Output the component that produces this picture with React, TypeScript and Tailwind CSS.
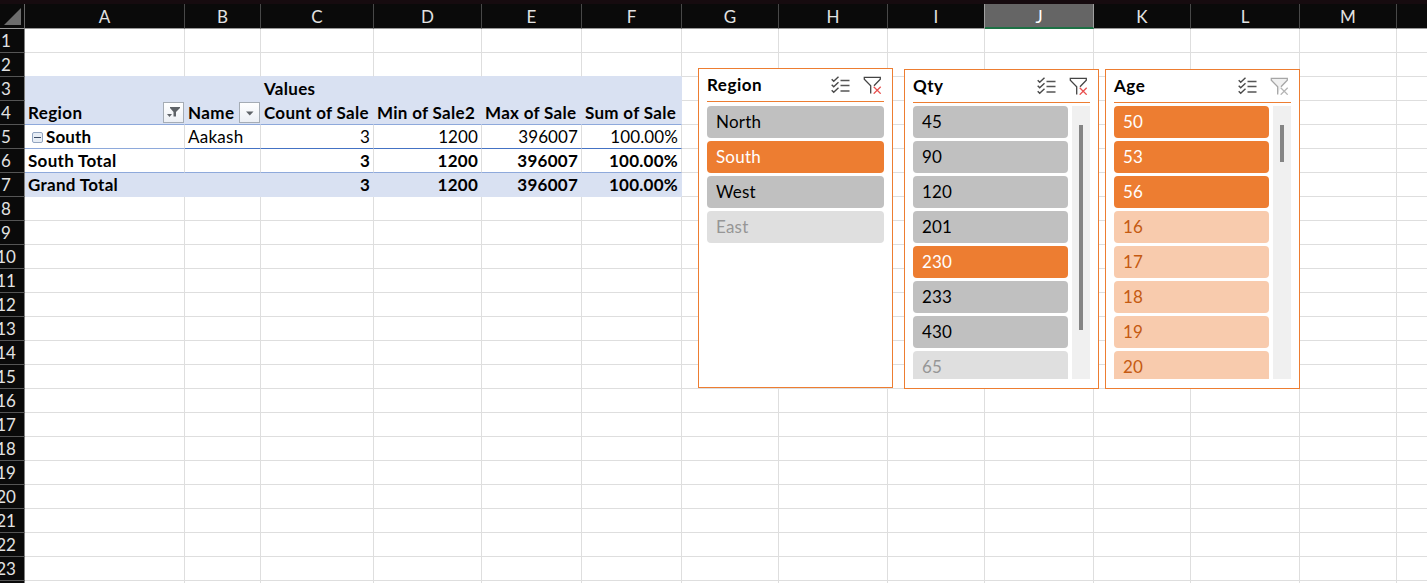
import React from "react";

const columns = [
  { name: "A", w: "w-[160px]" },
  { name: "B", w: "w-[76px]" },
  { name: "C", w: "w-[113px]" },
  { name: "D", w: "w-[108px]" },
  { name: "E", w: "w-[100px]" },
  { name: "F", w: "w-[100px]" },
  { name: "G", w: "w-[97px]" },
  { name: "H", w: "w-[109px]" },
  { name: "I", w: "w-[97px]" },
  { name: "J", w: "w-[109px]" },
  { name: "K", w: "w-[97px]" },
  { name: "L", w: "w-[109px]" },
  { name: "M", w: "w-[97px]" },
  { name: "", w: "w-[97px]" },
];

const data: Record<number, string[]> = {
  3: ["", "", "Values", "", "", ""],
  4: ["Region", "Name", "Count of Sale", "Min of Sale2", "Max of Sale", "Sum of Sale"],
  5: ["South", "Aakash", "3", "1200", "396007", "100.00%"],
  6: ["South Total", "", "3", "1200", "396007", "100.00%"],
  7: ["Grand Total", "", "3", "1200", "396007", "100.00%"],
};

function borderFor(row: number, col: number) {
  if (col > 5) return "border-r-[#dedede] border-b-[#dedede]";
  if (row === 2) return "border-r-[#dedede] border-b-[#d9e1f2]";
  if (row === 3) return "bg-[#d9e1f2] border-r-[#d9e1f2] border-b-[#d9e1f2]";
  if (row === 4) return "bg-[#d9e1f2] border-r-[#d9e1f2] border-b-[#8ea9db]";
  if (row === 5) return col === 0 ? "border-r-[#dedede] border-b-[#8ea9db]" : "border-r-[#dedede] border-b-[#4472c4]";
  if (row === 6) return "border-r-[#dedede] border-b-[#8ea9db]";
  if (row === 7) return "bg-[#d9e1f2] border-r-[#d9e1f2] border-b-[#d9e1f2]";
  return "border-r-[#dedede] border-b-[#dedede]";
}

function FieldButton({ filtered }: { filtered?: boolean }) {
  return (
    <span className="mt-[1px] h-[21px] w-[21px] shrink-0 border border-[#a5acb5] bg-linear-to-b from-white to-[#eceff5]">
      <svg width="19" height="19" viewBox="0 0 19 19" fill="#5f6368">
        {filtered ? (
          <>
            <path d="M6 4h10v1l-4 4v4.500h-2.500V9L6 5z" />
            <path d="M3 11h5l-2.500 3z" />
          </>
        ) : (
          <path d="M6 8.500h7.500L9.750 12.500z" />
        )}
      </svg>
    </span>
  );
}

function CellContent({ row, col }: { row: number; col: number }) {
  const text = data[row]?.[col];
  if (!text) return null;
  if (row === 5 && col === 0) {
    return (
      <span className="flex pl-[7px] font-bold tracking-[0.15px]">
        <svg width="11" height="11" viewBox="0 0 11 11" className="mt-[7px] mr-[3px]">
          <rect x=".5" y=".5" width="10" height="10" rx="1.5" fill="#e7edf5" stroke="#93a5c0" />
          <path d="M2 5.500h7" stroke="#3b4a63" />
        </svg>
        {text}
      </span>
    );
  }
  if (row >= 5 && col >= 2) {
    return (
      <span className={`ml-auto ${row === 5 ? "pr-[3px] tracking-[0.1px]" : "pr-[3px] font-bold tracking-[0.25px]"}`}>
        {text}
      </span>
    );
  }
  if (row === 4 && col < 2) {
    return (
      <span className="flex w-full justify-between pl-[3px] font-bold tracking-[0.4px]">
        {text}
        <FieldButton filtered={col === 0} />
      </span>
    );
  }
  return <span className={`pl-[3px] ${row === 5 ? "tracking-[0.25px]" : "font-bold tracking-[0.3px]"}`}>{text}</span>;
}

function ListIcon() {
  return (
    <svg width="20" height="18" viewBox="0 0 20 18" fill="none">
      <path d="M.7 3.300l2 2L7.500.7M.7 8.800l2 2L7.500 6.200M.7 14.300l2 2L7.500 11.700" stroke="#4a4a4a" strokeWidth="1.4" />
      <path d="M9.500 4.500H18.500M9.500 9.500H18.500M9.500 15H18.500" stroke="#555" strokeWidth="1.3" />
    </svg>
  );
}

function ClearIcon({ active }: { active: boolean }) {
  return (
    <svg width="19" height="18" viewBox="0 0 19 18" fill="none">
      <path
        d="M7.700 17.500V9.700L1.300 3.300V1.300h16v2L11 9.700"
        fill={active ? "none" : "#f0f0f0"}
        stroke={active ? "#444" : "#a6a6a6"}
        strokeWidth="1.3"
      />
      <path d="M10.700 10.700l7 7M17.700 10.700l-7 7" stroke={active ? "#e8504f" : "#b5b5b5"} strokeWidth="1.3" />
    </svg>
  );
}

type Tone = "on" | "gray" | "faded" | "peach";
const tones: Record<Tone, string> = {
  on: "bg-[#ed7d31] text-white",
  gray: "bg-[#c0c0c0] text-black",
  faded: "bg-[#dfdfdf] text-[#969696]",
  peach: "bg-[#f8cbad] text-[#c55a11]",
};

function Slicer(props: {
  title: string;
  place: string;
  pad: string;
  items: [string, Tone][];
  thumb?: string;
  active?: boolean;
}) {
  return (
    <section className={`absolute flex h-[320px] w-[195px] flex-col border border-[#ed7d31] bg-white px-2 pb-[9px] ${props.place}`}>
      <header className="flex h-[33px] shrink-0 items-start justify-between border-b border-[#ed7d31]">
        <h2 className="pt-[4px] text-[17px] leading-6 font-bold tracking-[0.5px]">{props.title}</h2>
        <div className="flex gap-[12px] pt-[7px] pr-[2px]">
          <ListIcon />
          <ClearIcon active={props.active !== false} />
        </div>
      </header>
      <div className={`flex min-h-0 flex-1 gap-1 ${props.pad}`}>
        <ul className="flex min-w-0 flex-1 flex-col gap-[3px] overflow-hidden">
          {props.items.map(([label, tone]) => (
            <li key={label} className={`h-8 shrink-0 rounded-[4px] pl-[9px] text-[17px] leading-8 tracking-[0.2px] ${tones[tone]}`}>
              {label}
            </li>
          ))}
        </ul>
        {props.thumb && (
          <div className="flex w-[18px] justify-center bg-[#f0f0f0] pt-[19px]">
            <div className={`w-1 bg-[#858585] ${props.thumb}`} />
          </div>
        )}
      </div>
    </section>
  );
}

export default function App() {
  return (
    <main className="relative h-[583px] w-[1427px] overflow-hidden bg-white font-['Lato','Liberation_Sans',sans-serif] text-[17px] leading-6 text-black">
      <div className="h-1 bg-[#160b0f]" />
      <div className="flex h-[25px] bg-[#0a0a0a] text-[#e2e2e2]">
        <div className="flex w-[25px] shrink-0 items-start border-r border-b border-r-[#666] border-b-[#999] pt-[4px] pl-[4px]">
          <svg width="17" height="17" viewBox="0 0 17 17">
            <path d="M17 0v17H0z" fill="#6d6d6d" />
          </svg>
        </div>
        {columns.map((c, i) => (
          <div
            key={i}
            className={`${c.w} shrink-0 border-r text-center leading-[26px] ${
              c.name === "J"
                ? "border-b-2 border-r-[#a0a0a0] border-b-[#1e7145] bg-[#656565] text-white"
                : c.name === "I"
                  ? "border-b border-r-[#a0a0a0] border-b-[#999]"
                  : "border-b border-r-[#484848] border-b-[#999]"
            }`}
          >
            {c.name}
          </div>
        ))}
      </div>
      {Array.from({ length: 24 }, (_, i) => i + 1).map((row) => (
        <div key={row} className="flex h-6">
          <div className="w-[25px] shrink-0 overflow-hidden border-r border-b border-r-[#808080] border-b-[#555] bg-[#0a0a0a] text-[#e2e2e2]">
            <div className="-ml-3 w-9 text-center leading-[23px]">{row}</div>
          </div>
          {columns.map((c, col) => (
            <div key={col} className={`flex shrink-0 border-r border-b leading-[23px] whitespace-nowrap ${c.w} ${borderFor(row, col)}`}>
              <CellContent row={row} col={col} />
            </div>
          ))}
        </div>
      ))}
      <Slicer
        title="Region"
        place="left-[698px] top-[68px]"
        pad="pt-[4px]"
        items={[["North", "gray"], ["South", "on"], ["West", "gray"], ["East", "faded"]]}
      />
      <Slicer
        title="Qty"
        place="left-[904px] top-[69px]"
        pad="pt-[3px]"
        thumb="h-[205px]"
        items={[["45", "gray"], ["90", "gray"], ["120", "gray"], ["201", "gray"], ["230", "on"], ["233", "gray"], ["430", "gray"], ["65", "faded"]]}
      />
      <Slicer
        title="Age"
        place="left-[1105px] top-[69px]"
        pad="pt-[3px]"
        thumb="h-[37px]"
        active={false}
        items={[["50", "on"], ["53", "on"], ["56", "on"], ["16", "peach"], ["17", "peach"], ["18", "peach"], ["19", "peach"], ["20", "peach"]]}
      />
    </main>
  );
}
